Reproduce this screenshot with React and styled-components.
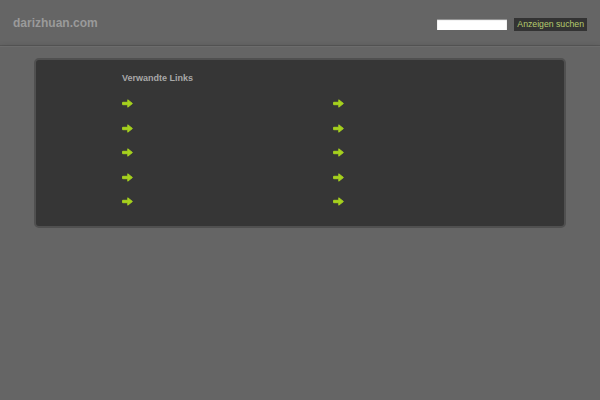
import React from "react";
import styled, { createGlobalStyle } from "styled-components";

const GlobalStyle = createGlobalStyle`
  html, body {
    margin: 0;
    padding: 0;
    background: #656565;
    font-family: "Liberation Sans", Arial, sans-serif;
  }
`;

const Header = styled.div`
  height: 45px;
  display: flex;
  align-items: flex-start;
  justify-content: space-between;
  padding: 0 13px 0 13px;
  border-bottom: 1px solid #585858;
  box-shadow: 0 1px 0 #6c6c6c;
`;

const Domain = styled.div`
  margin-top: 16px;
  font-size: 12px;
  font-weight: bold;
  color: #9a9a9a;
`;

const SearchForm = styled.form`
  margin-top: 18px;
  display: flex;
  align-items: center;
  gap: 7px;
`;

const SearchInput = styled.input`
  width: 70px;
  height: 11px;
  padding: 0;
  border: none;
  background: #fff;
  box-shadow: inset 0 1px 1px #888;
`;

const SearchButton = styled.button`
  height: 13px;
  padding: 0 3px;
  border: none;
  background: #333;
  color: #b5cc6e;
  font-family: "Liberation Sans", Arial, sans-serif;
  font-size: 8.7px;
  line-height: 13px;
`;

const Band = styled.div`
  padding: 12px 34px 12px;
  box-shadow: 0 3px 7px rgba(0, 0, 0, 0.4);
`;

const Panel = styled.div`
  height: 170px;
  box-sizing: border-box;
  background: #363636;
  border: 2px solid #505050;
  border-radius: 5px;
  padding: 13px 0 0 86px;
`;

const Title = styled.div`
  font-size: 9px;
  font-weight: bold;
  color: #a8a8a8;
  margin-bottom: 16px;
`;

const LinkGrid = styled.div`
  display: grid;
  grid-template-columns: 211px 211px;
  row-gap: 15.5px;
`;

const LinkItem = styled.a`
  display: flex;
  align-items: center;
  height: 9px;
  color: #9acd32;
`;

const Arrow = () => (
  <svg width="11" height="9" viewBox="0 0 11 9">
    <path
      d="M0.6 3.3 H5.8 V0.8 L10.4 4.5 L5.8 8.2 V5.7 H0.6 Z"
      fill="#a6d11e"
      stroke="#a6d11e"
      strokeWidth="1"
      strokeLinejoin="round"
    />
  </svg>
);

const links = Array.from({ length: 10 }, (_, i) => i);

export default function App() {
  return (
    <>
      <GlobalStyle />
      <Header>
        <Domain>darizhuan.com</Domain>
        <SearchForm onSubmit={e => e.preventDefault()}>
          <SearchInput type="text" />
          <SearchButton type="submit">Anzeigen suchen</SearchButton>
        </SearchForm>
      </Header>
      <Band>
        <Panel>
          <Title>Verwandte Links</Title>
          <LinkGrid>
            {links.map(i => (
              <LinkItem key={i} href="#">
                <Arrow />
              </LinkItem>
            ))}
          </LinkGrid>
        </Panel>
      </Band>
    </>
  );
}
